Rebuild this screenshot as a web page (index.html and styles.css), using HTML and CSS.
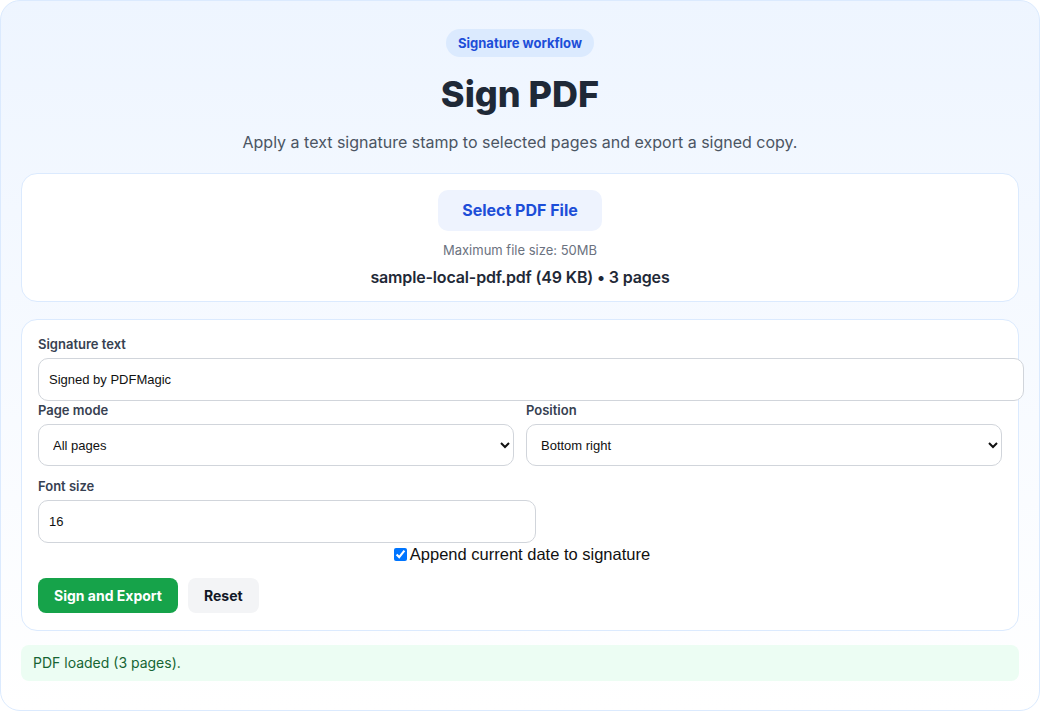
FILE: index.html
```html
<!DOCTYPE html>
<html lang="en">
<head>
<meta charset="utf-8">
<title>Sign PDF</title>
<link rel="stylesheet" href="styles.css">
</head>
<body>
<main class="app">
  <header class="hero">
    <span class="badge">Signature workflow</span>
    <h1 class="title">Sign PDF</h1>
    <p class="subtitle">Apply a text signature stamp to selected pages and export a signed copy.</p>
  </header>

  <section class="card upload">
    <button class="btn-select" type="button">Select PDF File</button>
    <p class="hint">Maximum file size: 50MB</p>
    <p class="file-info">sample-local-pdf.pdf (49 KB) • 3 pages</p>
  </section>

  <section class="card form">
    <label class="field-label" for="sig">Signature text</label>
    <input class="text-input full" id="sig" type="text" value="Signed by PDFMagic">

    <div class="grid">
      <div class="field">
        <label class="field-label" for="mode">Page mode</label>
        <select class="select" id="mode">
          <option>All pages</option>
        </select>
      </div>
      <div class="field">
        <label class="field-label" for="pos">Position</label>
        <select class="select" id="pos">
          <option>Bottom right</option>
        </select>
      </div>
      <div class="field">
        <label class="field-label" for="fs">Font size</label>
        <input class="text-input" id="fs" type="number" value="16">
      </div>
    </div>

    <label class="check-row"><input type="checkbox" checked>Append current date to signature</label>

    <div class="actions">
      <button class="btn btn-primary" type="button">Sign and Export</button>
      <button class="btn btn-secondary" type="button">Reset</button>
    </div>
  </section>

  <div class="status">PDF loaded (3 pages).</div>
</main>
</body>
</html>
```

FILE: styles.css
```css
* { box-sizing: border-box; }

html, body {
  margin: 0;
  padding: 0;
  background: #ffffff;
}

body {
  font-family: Inter, "Noto Sans", sans-serif;
  color: #1f2937;
}

.app {
  width: 1040px;
  height: 711px;
  border: 1px solid #dbeafe;
  border-radius: 20px;
  background: linear-gradient(180deg, #eef5ff 0%, #ffffff 100%);
  padding: 28px 20px 0;
  display: flex;
  flex-direction: column;
}

.hero {
  display: flex;
  flex-direction: column;
  align-items: center;
  text-align: center;
}

.badge {
  display: inline-block;
  height: 28px;
  line-height: 28px;
  padding: 0 12px;
  border-radius: 999px;
  background: #dbeafe;
  color: #1d4ed8;
  font-size: 13px;
  font-weight: 700;
}

.title {
  margin: 15px 0 0;
  font-size: 36px;
  line-height: 44px;
  font-weight: 800;
  letter-spacing: 0;
  color: #1f2937;
}

.subtitle {
  margin: 14px 0 0;
  font-size: 16px;
  line-height: 24px;
  color: #4b5563;
}

.card {
  background: #ffffff;
  border: 1px solid #dbeafe;
  border-radius: 16px;
}

.upload {
  margin-top: 19px;
  padding: 16px 16px 14px;
  display: flex;
  flex-direction: column;
  align-items: center;
}

.btn-select {
  font-family: Inter, sans-serif;
  font-size: 16px;
  font-weight: 700;
  line-height: 19px;
  color: #1d4ed8;
  background: #eef3fe;
  border: none;
  border-radius: 10px;
  padding: 11px 24px;
}

.hint {
  margin: 11px 0 0;
  font-size: 13px;
  line-height: 16px;
  color: #6b7280;
}

.file-info {
  margin: 9px 0 0;
  font-size: 16px;
  line-height: 20px;
  font-weight: 600;
  letter-spacing: -0.15px;
  color: #1f2937;
}

.form {
  margin-top: 17px;
  padding: 16px 16px 17px;
}

.field-label {
  display: block;
  font-size: 13px;
  line-height: 16px;
  font-weight: 600;
  color: #374151;
  margin-bottom: 6px;
}

.text-input {
  box-sizing: content-box;
  display: block;
  width: 100%;
  padding: 12px 10px;
  line-height: 17px;
  height: 17px;
  font-family: "Liberation Sans", Arial, sans-serif;
  font-size: 13px;
  color: #111111;
  border: 1px solid #d1d5db;
  border-radius: 10px;
  background: #ffffff;
}

.grid {
  display: grid;
  grid-template-columns: 1fr 1fr;
  column-gap: 12px;
  row-gap: 12px;
  margin-top: 1px;
}

.field { min-width: 0; }

.select {
  display: block;
  width: 100%;
  height: 42px;
  padding: 0 10px;
  font-family: "Liberation Sans", Arial, sans-serif;
  font-size: 13px;
  color: #111111;
  border: 1px solid #d1d5db;
  border-radius: 10px;
  background: #ffffff;
}

.check-row {
  display: flex;
  align-items: center;
  justify-content: center;
  gap: 3px;
  margin-top: 2px;
  font-family: "Liberation Sans", Arial, sans-serif;
  font-size: 16.5px;
  line-height: 19px;
  color: #111111;
}

.check-row input {
  margin: 0 0 0 4px;
  width: 13px;
  height: 13px;
}

.actions {
  display: flex;
  gap: 10px;
  margin-top: 14px;
}

.btn {
  font-family: Inter, sans-serif;
  font-size: 14px;
  font-weight: 700;
  line-height: 17px;
  border: none;
  border-radius: 8px;
  padding: 9px 16px;
  height: 35px;
}

.btn-primary {
  background: #16a34a;
  color: #ffffff;
}

.btn-secondary {
  background: #f3f4f6;
  color: #111827;
}

.status {
  margin-top: 14px;
  padding: 9px 12px;
  border-radius: 8px;
  background: #ecfdf3;
  color: #166534;
  font-size: 14px;
  line-height: 18px;
}
```
